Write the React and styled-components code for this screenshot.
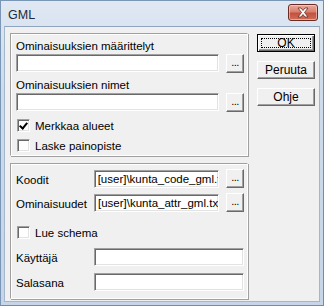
import styled, { createGlobalStyle } from 'styled-components';

const GlobalStyle = createGlobalStyle`
  html, body {
    margin: 0;
    padding: 0;
    background: #ffffff;
  }
  * {
    box-sizing: border-box;
  }
`;

const FONT = `'Liberation Sans', Arial, sans-serif`;

const App = () => {
  return (
    <>
      <GlobalStyle />
      <Window>
        <TitleBar>
          <Title>GML</Title>
          <CloseButton aria-label="Sulje">
            <svg width="14" height="11" viewBox="0 0 14 11">
              <path
                d="M2 1 L5 1 L7 3.5 L9 1 L12 1 L8.5 5.5 L12 10 L9 10 L7 7.5 L5 10 L2 10 L5.5 5.5 Z"
                fill="#ffffff"
                stroke="#6a2a22"
                strokeWidth="0.8"
                strokeLinejoin="round"
              />
            </svg>
          </CloseButton>
        </TitleBar>
        <Client>
          <MainColumn>
            <Group height={123}>
              <FieldLabel top={5}>Ominaisuuksien määrittelyt</FieldLabel>
              <InputRow>
                <TextBox width={204} />
                <BrowseButton>...</BrowseButton>
              </InputRow>
              <FieldLabel top={5}>Ominaisuuksien nimet</FieldLabel>
              <InputRow>
                <TextBox width={204} />
                <BrowseButton>...</BrowseButton>
              </InputRow>
              <CheckRow top={7}>
                <CheckBox checked />
                Merkkaa alueet
              </CheckRow>
              <CheckRow top={7}>
                <CheckBox />
                Laske painopiste
              </CheckRow>
            </Group>
            <Group height={136}>
              <FormRow top={5}>
                <RowLabel>Koodit</RowLabel>
                <TextBox width={126}>
                  <PathText>[user]\kunta_code_gml.txt</PathText>
                </TextBox>
                <BrowseButton>...</BrowseButton>
              </FormRow>
              <FormRow top={5}>
                <RowLabel>Ominaisuudet</RowLabel>
                <TextBox width={126}>
                  <PathText>[user]\kunta_attr_gml.txt</PathText>
                </TextBox>
                <BrowseButton>...</BrowseButton>
              </FormRow>
              <CheckRow top={14}>
                <CheckBox />
                Lue schema
              </CheckRow>
              <FormRow top={9}>
                <RowLabel>Käyttäjä</RowLabel>
                <TextBox width={150} />
              </FormRow>
              <FormRow top={7}>
                <RowLabel>Salasana</RowLabel>
                <TextBox width={150} />
              </FormRow>
            </Group>
          </MainColumn>
          <ButtonColumn>
            <DialogButton primary>OK</DialogButton>
            <DialogButton>Peruuta</DialogButton>
            <DialogButton>Ohje</DialogButton>
          </ButtonColumn>
        </Client>
      </Window>
    </>
  );
};

export default App;

const Window = styled.div`
  width: 324px;
  height: 306px;
  display: flex;
  flex-direction: column;
  background: linear-gradient(180deg, #dfe8f3 0%, #cddbea 30%, #c6d6e8 100%);
  border: 1px solid #7a96b6;
  border-right-color: #2aa6e4;
  border-bottom-color: #2aa6e4;
  font-family: ${FONT};
  font-size: 11.5px;
  color: #000000;
`;

const TitleBar = styled.div`
  height: 25px;
  flex: 0 0 25px;
  display: flex;
  align-items: center;
  justify-content: space-between;
  padding: 0 5px 0 7px;
`;

const Title = styled.span`
  font-family: ${FONT};
  font-size: 12.5px;
  color: #1e2a3a;
  margin-top: 3px;
`;

const CloseButton = styled.div`
  width: 30px;
  height: 17px;
  margin-top: -2px;
  display: flex;
  align-items: center;
  justify-content: center;
  border: 1px solid #6b2b25;
  border-radius: 3px;
  background: linear-gradient(180deg, #e9a99c 0%, #d7806f 45%, #c3523d 55%, #cf6d58 100%);
  box-shadow: inset 0 0 0 1px rgba(255, 220, 210, 0.55);
`;

const Client = styled.div`
  flex: 1;
  display: flex;
  background: #f0f0f0;
  margin: 0 3px 3px 3px;
  padding: 6px 6px 0 5px;
  border: 1px solid #a3b6cc;
  border-top-color: #8ea4bf;
`;

const MainColumn = styled.div`
  width: 238px;
  display: flex;
  flex-direction: column;
  gap: 7px;
`;

const Group = styled.div`
  height: ${({ height }) => height}px;
  display: flex;
  flex-direction: column;
  padding: 0 3px 0 5px;
  border: 1px solid #a0a0a0;
  border-right-color: #ffffff;
  border-bottom-color: #ffffff;
  box-shadow: inset 1px 1px 0 #ffffff, 1px 1px 0 #a0a0a0;
`;

const FieldLabel = styled.div`
  margin-top: ${({ top }) => top}px;
  height: 15px;
  line-height: 15px;
`;

const InputRow = styled.div`
  display: flex;
  align-items: flex-start;
  gap: 7px;
`;

const TextBox = styled.div`
  width: ${({ width }) => width}px;
  height: 18px;
  background: #ffffff;
  border: 1px solid #a0a0a0;
  border-right-color: #ffffff;
  border-bottom-color: #ffffff;
  box-shadow: inset 1px 1px 0 #696969, inset -1px -1px 0 #e3e3e3;
  overflow: hidden;
  white-space: nowrap;
  display: flex;
  align-items: center;
`;

const PathText = styled.span`
  padding-left: 3px;
  line-height: 14px;
`;

const BrowseButton = styled.div`
  width: 18px;
  height: 19px;
  background: #f0f0f0;
  border: 1px solid #ffffff;
  border-right-color: #696969;
  border-bottom-color: #696969;
  box-shadow: inset -1px -1px 0 #a0a0a0;
  font-size: 11px;
  line-height: 14px;
  text-align: center;
  letter-spacing: -0.5px;
`;

const CheckRow = styled.label`
  margin-top: ${({ top }) => top}px;
  display: flex;
  align-items: center;
  gap: 5px;
  height: 13px;
  padding-left: 1px;
`;

const CheckBox = styled.span`
  width: 13px;
  height: 13px;
  flex: 0 0 13px;
  background: #ffffff;
  border: 1px solid #a0a0a0;
  border-right-color: #ffffff;
  border-bottom-color: #ffffff;
  box-shadow: inset 1px 1px 0 #696969, inset -1px -1px 0 #e3e3e3;
  position: relative;
  &::after {
    content: '';
    display: ${({ checked }) => (checked ? 'block' : 'none')};
    position: absolute;
    left: 3px;
    top: 1px;
    width: 3px;
    height: 6px;
    border: solid #000000;
    border-width: 0 2px 2px 0;
    transform: rotate(40deg);
  }
`;

const FormRow = styled.div`
  margin-top: ${({ top }) => top}px;
  display: flex;
  align-items: center;
  gap: 7px;
`;

const RowLabel = styled.span`
  width: 71px;
  padding-top: 2px;
`;

const ButtonColumn = styled.div`
  margin-left: 9px;
  padding-top: 1px;
  display: flex;
  flex-direction: column;
  gap: 9px;
`;

const DialogButton = styled.div`
  width: 58px;
  height: 18px;
  display: flex;
  align-items: center;
  justify-content: center;
  background: #f0f0f0;
  border: 1px solid ${({ primary }) => (primary ? '#000000' : '#ffffff')};
  border-right-color: ${({ primary }) => (primary ? '#000000' : '#696969')};
  border-bottom-color: ${({ primary }) => (primary ? '#000000' : '#696969')};
  box-shadow: ${({ primary }) =>
    primary
      ? 'inset 1px 1px 0 #ffffff, inset -1px -1px 0 #696969, inset -2px -2px 0 #a0a0a0'
      : 'inset -1px -1px 0 #a0a0a0'};
  position: relative;
  font-size: 12px;
  &::after {
    content: '';
    display: ${({ primary }) => (primary ? 'block' : 'none')};
    position: absolute;
    inset: 3px;
    border: 1px dotted #000000;
  }
`;
